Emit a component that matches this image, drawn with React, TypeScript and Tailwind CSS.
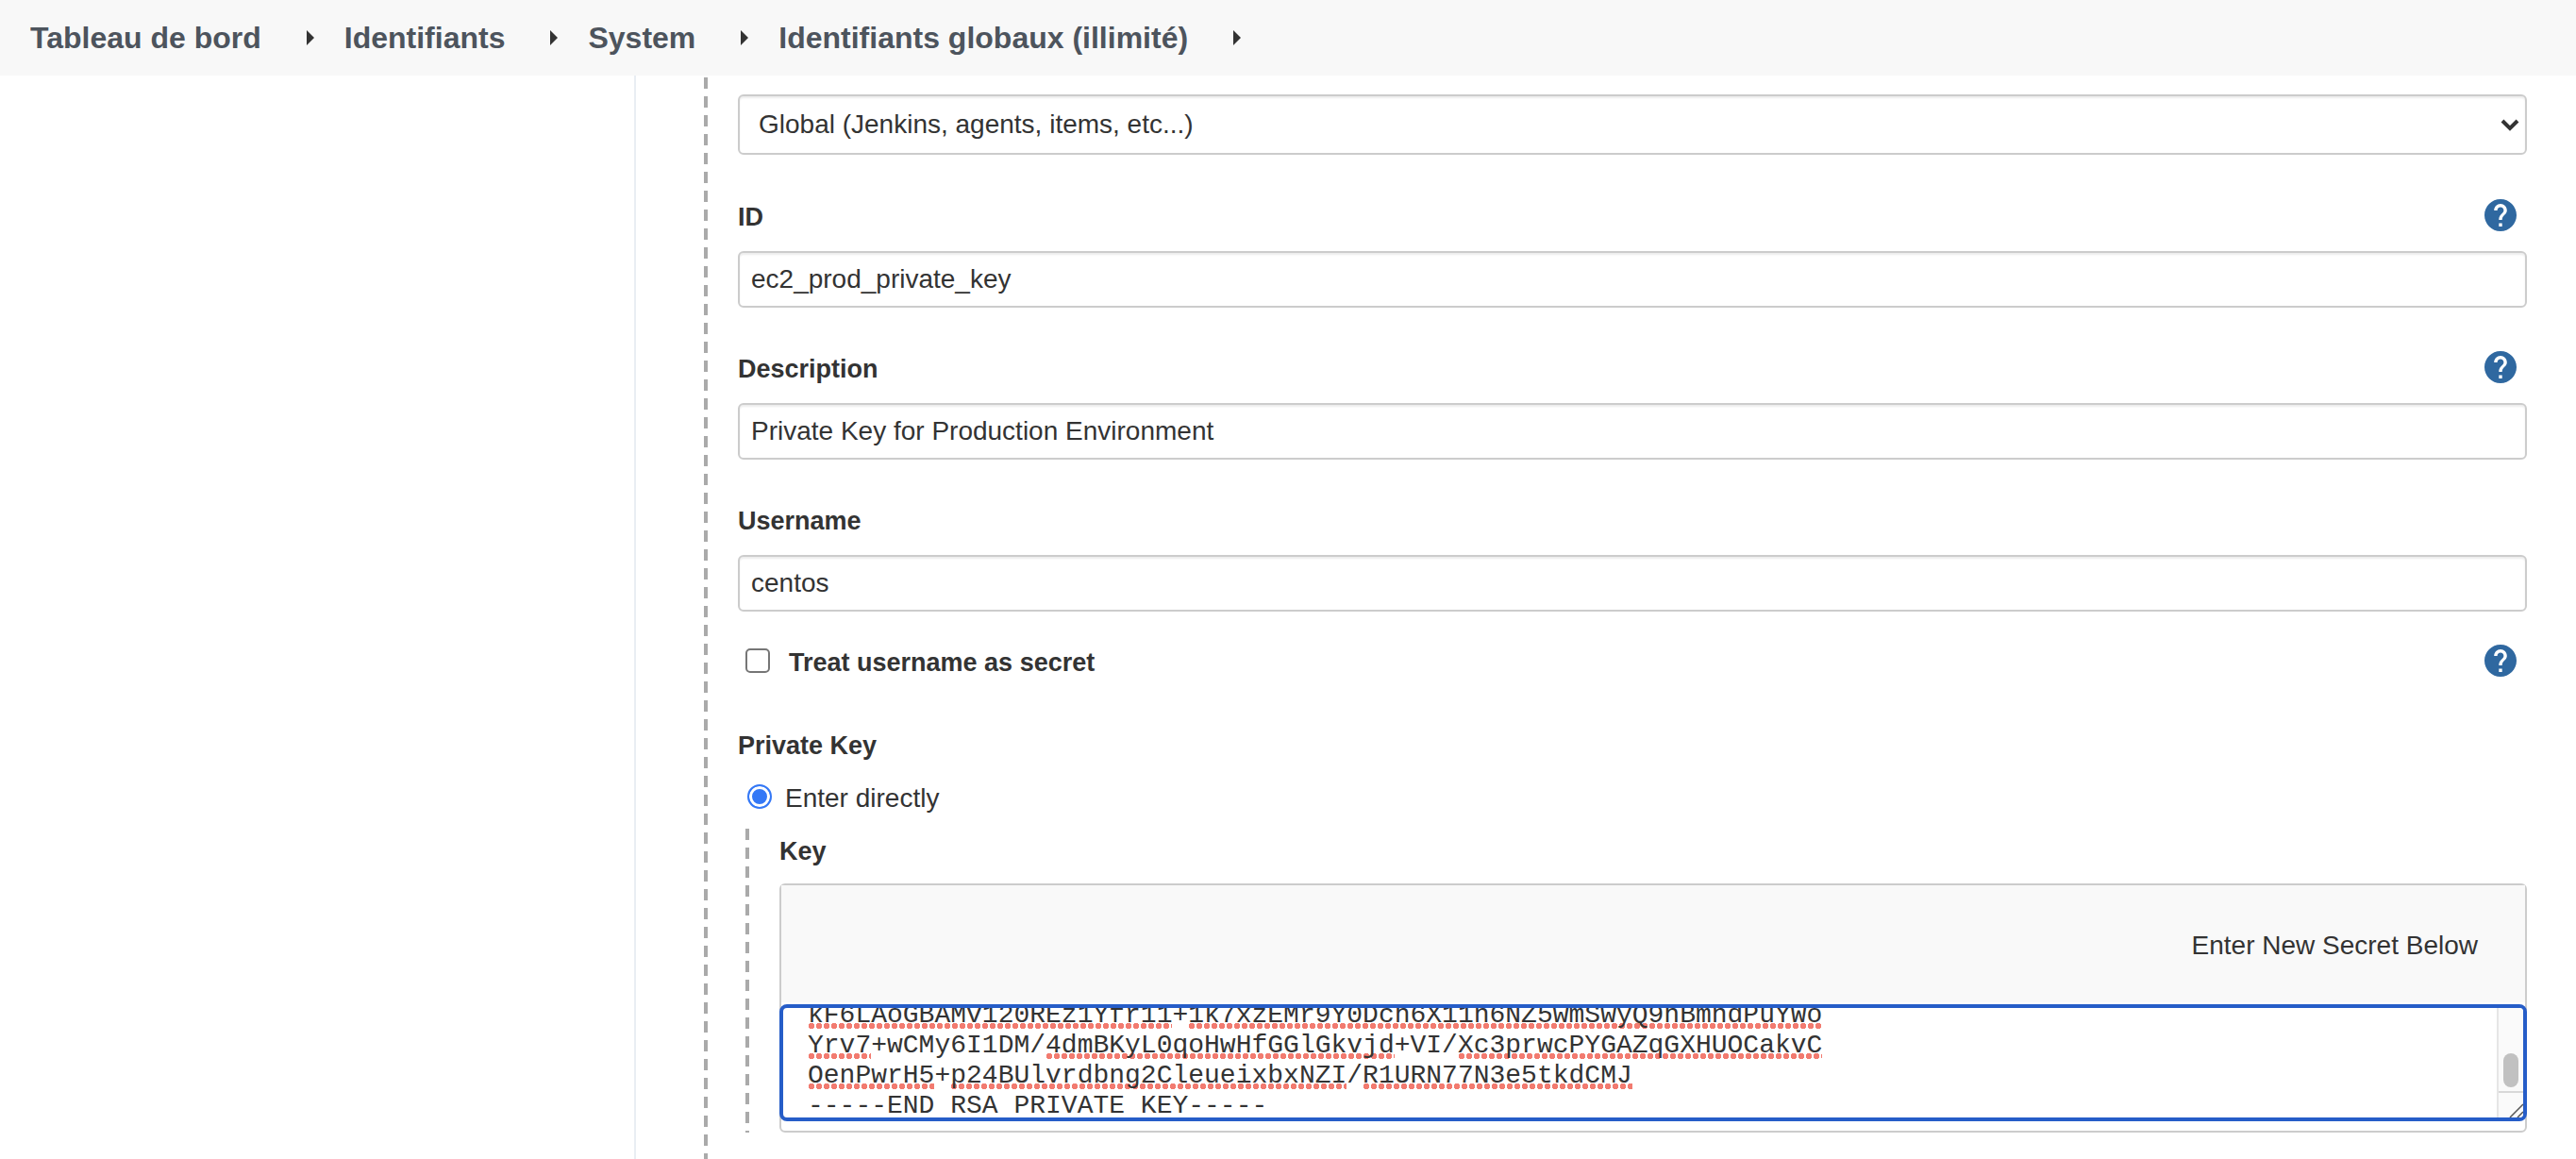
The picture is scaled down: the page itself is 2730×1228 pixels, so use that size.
import { useEffect, useRef, type ReactNode } from "react";

const crumbs = ["Tableau de bord", "Identifiants", "System", "Identifiants globaux (illimité)"];

const keyLines = [
  "kF6LAoGBAMv120REz1Yfr11+1k7xzEMr9Y0Dch6X11n6NZ5wmSwyQ9hBmndPuYWo",
  "Yrv7+wCMy6I1DM/4dmBKyL0qoHwHfGGlGkvjd+VI/Xc3prwcPYGAZqGXHUOCakvC",
  "OenPwrH5+p24BUlvrdbng2CleueixbxNZI/R1URN77N3e5tkdCMJ",
  "-----END RSA PRIVATE KEY-----",
];

// Misspelled runs per line, as [start column, length].
const misspelled: [number, number][][] = [
  [[0, 23], [24, 40]],
  [[0, 4], [15, 22], [41, 23]],
  [[0, 8], [9, 25], [35, 17]],
  [],
];

function HelpButton({ topic }: { topic: string }) {
  return (
    <button type="button" aria-label={`Aide : ${topic}`} className="mr-2.5 flex size-9 items-center justify-center">
      <svg viewBox="2 2 20 20" className="size-[34px] fill-[#2f68a0]" aria-hidden="true">
        <path d="M12 2C6.48 2 2 6.48 2 12s4.48 10 10 10 10-4.48 10-10S17.52 2 12 2zm1 17h-2v-2h2v2zm2.07-7.75l-.9.92C13.45 12.9 13 13.5 13 15h-2v-.5c0-1.1.45-2.1 1.17-2.83l1.24-1.26c.37-.36.59-.86.59-1.41 0-1.1-.9-2-2-2s-2 .9-2 2H8c0-2.21 1.79-4 4-4s4 1.79 4 4c0 .88-.36 1.68-.93 2.25z" />
      </svg>
    </button>
  );
}

function Strong({ children }: { children: ReactNode }) {
  return <span className="block pt-1 text-[27px] leading-9 font-bold">{children}</span>;
}

function TextField({ id, label, value, help }: { id: string; label: string; value: string; help?: boolean }) {
  return (
    <div>
      <div className="flex h-9 items-center justify-between">
        <label htmlFor={id}>
          <Strong>{label}</Strong>
        </label>
        {help && <HelpButton topic={label} />}
      </div>
      <input
        id={id}
        type="text"
        defaultValue={value}
        className="mt-5 block h-[60px] w-full rounded-md border-2 border-[#ccc] bg-white px-3 shadow-[inset_0_2px_2px_rgba(0,0,0,0.075)] outline-none"
      />
    </div>
  );
}

function DashedRule() {
  return (
    <div className="w-1 shrink-0 bg-[repeating-linear-gradient(to_bottom,#aaa_0_12px,transparent_12px_20px)]" />
  );
}

function SecretArea() {
  const area = useRef<HTMLTextAreaElement>(null);
  useEffect(() => {
    if (area.current) area.current.scrollTop = 8;
  }, []);
  return (
    <div className="relative flex h-[124px] overflow-hidden rounded-lg border-4 border-[#265dc8] bg-white">
      <div aria-hidden="true" className="absolute inset-x-[26px] top-0 -mt-2 font-['Liberation_Mono',monospace] leading-8">
        {misspelled.map((runs, row) => (
          <div key={row} className="relative h-8">
            {runs.map(([start, length]) => (
              <span
                key={start}
                className="absolute bottom-0.5 h-1.5 bg-[radial-gradient(circle_at_center,#f27b70_0_3px,transparent_3px)] bg-[length:8px_6px] bg-repeat-x"
                style={{ left: `${start}ch`, width: `${length}ch` }}
              />
            ))}
          </div>
        ))}
      </div>
      <textarea
        ref={area}
        id="key"
        spellCheck={false}
        defaultValue={keyLines.join("\n")}
        className="relative block h-full min-w-0 flex-1 resize-none overflow-hidden bg-transparent pl-[26px] font-['Liberation_Mono',monospace] leading-8 outline-none"
      />
      <div aria-hidden="true" className="relative flex w-7 shrink-0 flex-col border-l-2 border-[#e6e6e6] bg-[#fafafa]">
        <div className="flex flex-1 items-end justify-center border-b-2 border-[#d8d8d8] pb-1">
          <div className="h-9 w-4 rounded-full bg-[#c1c1c1]" />
        </div>
        <svg viewBox="0 0 26 26" className="h-[26px] w-full fill-none stroke-[#555] [stroke-width:1.5]">
          <path d="M12 26 26 12M20 26l6-6" />
        </svg>
      </div>
    </div>
  );
}

export default function App() {
  return (
    <div className="flex h-screen flex-col overflow-hidden bg-white font-['Liberation_Sans',Arial,sans-serif] text-[28px] leading-9 text-[#333]">
      <nav aria-label="Fil d'Ariane" className="flex h-20 shrink-0 items-center bg-[#f8f8f8] pl-8 text-[32px] font-bold text-[#4d545d]">
        {crumbs.map((crumb) => (
          <div key={crumb} className="flex items-center">
            <a href="#" className="mr-12">{crumb}</a>
            <svg viewBox="0 0 8 16" className="mr-8 h-4 w-2 fill-[#333]" aria-hidden="true">
              <path d="M0 0 8 8 0 16z" />
            </svg>
          </div>
        ))}
      </nav>
      <div className="flex min-h-0 flex-1">
        <aside className="w-[674px] shrink-0 border-r-2 border-[#e9eef3]" />
        <main className="flex min-w-0 flex-1 pr-[52px] pl-[72px]">
          <div className="flex pt-0.5">
            <DashedRule />
          </div>
          <form className="min-w-0 flex-1 pt-5 pl-8">
            <div className="relative">
              <select
                aria-label="Portée"
                className="block h-16 w-full appearance-none rounded-md border-2 border-[#ccc] bg-white px-5 shadow-[inset_0_2px_2px_rgba(0,0,0,0.075)] outline-none"
              >
                <option>Global (Jenkins, agents, items, etc...)</option>
              </select>
              <svg viewBox="0 0 20 14" className="pointer-events-none absolute top-[26px] right-2 h-3.5 w-5 fill-none stroke-[#333] [stroke-width:4]" aria-hidden="true">
                <path d="M2 2l8 8 8-8" />
              </svg>
            </div>

            <div className="mt-[46px] space-y-[45px]">
              <TextField id="cred-id" label="ID" value="ec2_prod_private_key" help />
              <TextField id="description" label="Description" value="Private Key for Production Environment" help />
              <TextField id="username" label="Username" value="centos" />
            </div>

            <div className="mt-[34px] flex h-9 items-center justify-between">
              <label className="flex items-center gap-5 pl-2">
                <input type="checkbox" className="size-[26px] appearance-none rounded-[5px] border-2 border-[#767676] bg-white" />
                <Strong>Treat username as secret</Strong>
              </label>
              <HelpButton topic="Treat username as secret" />
            </div>

            <fieldset className="mt-[52px]">
              <legend className="flex h-9 items-center"><Strong>Private Key</Strong></legend>
              <label className="mt-5 flex h-9 items-center gap-3.5 pl-2.5">
                <input
                  type="radio"
                  name="source"
                  defaultChecked
                  className="size-[26px] appearance-none rounded-full border-2 border-[#3478f6] bg-[#3478f6] shadow-[inset_0_0_0_3px_white]"
                />
                <span className="block pt-1">Enter directly</span>
              </label>
              <div className="mt-4 flex pl-2">
                <DashedRule />
                <div className="min-w-0 flex-1 pl-8">
                  <label htmlFor="key" className="flex h-[58px] items-start pt-0.5">
                    <Strong>Key</Strong>
                  </label>
                  <div className="rounded-md border-2 border-[#ccc]">
                    <div className="flex h-[124px] items-center justify-end bg-[#f9f9f9] pt-1 pr-[50px]">Enter New Secret Below</div>
                    <div className="-mx-0.5 mt-0.5 mb-2.5">
                      <SecretArea />
                    </div>
                  </div>
                </div>
              </div>
            </fieldset>
          </form>
        </main>
      </div>
    </div>
  );
}
